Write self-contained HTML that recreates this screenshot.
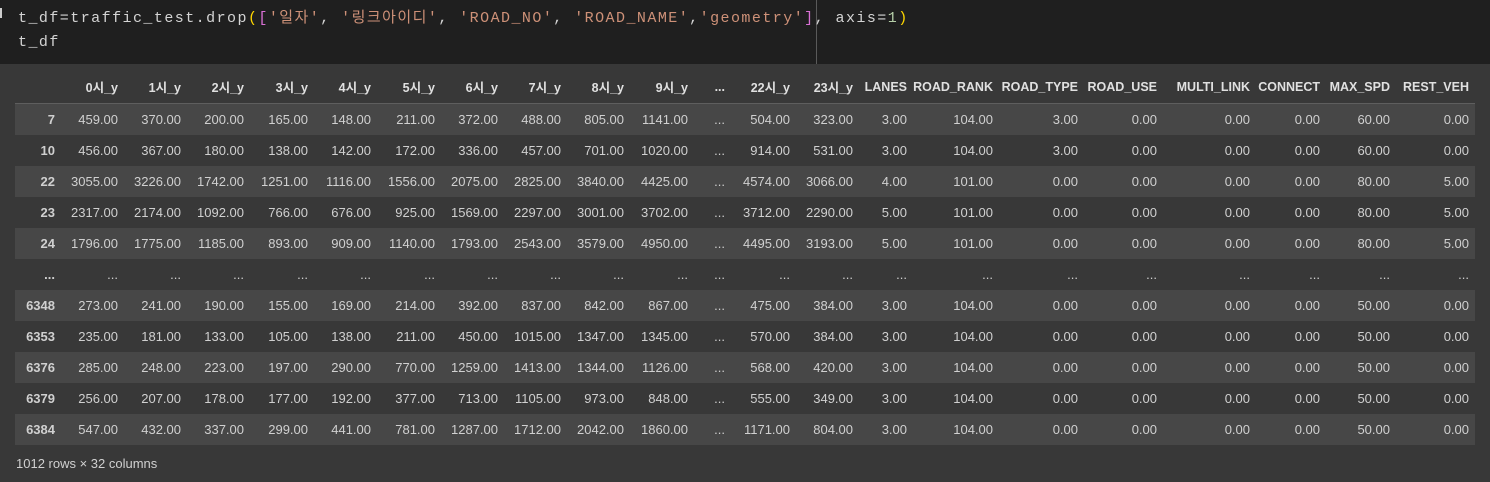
<!DOCTYPE html>
<html><head><meta charset="utf-8"><style>
body{margin:0;width:1490px;height:482px;background:#383838;overflow:hidden;font-family:"Liberation Sans","Noto Sans CJK KR",sans-serif;}
#code{position:absolute;left:0;top:0;width:1490px;height:64px;background:#1f1f1f;}
#code pre{position:absolute;left:18px;top:7px;margin:0;font-family:"Liberation Mono","Noto Sans CJK KR",monospace;font-size:15px;line-height:24px;color:#d4d4d4;letter-spacing:1.45px}
.s{color:#ce9178}.y{color:#ffd700}.p{color:#da70d6}.n{color:#b5cea8}
#ruler{position:absolute;left:816px;top:0;width:1px;height:64px;background:#5a5a5a}
#mark{position:absolute;left:0;top:8px;width:2px;height:10px;background:#ccc}
table{position:absolute;left:15px;top:64px;border-collapse:collapse;table-layout:fixed;font-size:13px;color:#d0d0d0;}
td,th{text-align:right;padding:0;white-space:nowrap;overflow:visible}
thead th{height:39px;font-weight:bold;color:#e0e0e0;font-size:12.5px;padding-top:7px;box-sizing:border-box}
thead tr{border-bottom:1px solid #5e5e5e}
tbody td{height:31px}
tbody th{height:31px}
tbody tr:nth-child(odd){background:#474747}
.last{padding-right:6px}
#foot{position:absolute;left:16px;top:456px;font-size:13px;color:#d0d0d0}
</style></head><body>
<div id="code"><div id="mark"></div><div id="ruler"></div>
<pre>t_df=traffic_test.drop<span class="y">(</span><span class="p">[</span><span class="s">'일자'</span>, <span class="s">'링크아이디'</span>, <span class="s">'ROAD_NO'</span>, <span class="s">'ROAD_NAME'</span>,<span class="s">'geometry'</span><span class="p">]</span>, axis=<span class="n">1</span><span class="y">)</span>
t_df</pre></div>
<table>
<colgroup><col style="width:40px"><col style="width:63px"><col style="width:63px"><col style="width:63px"><col style="width:64px"><col style="width:63px"><col style="width:64px"><col style="width:63px"><col style="width:63px"><col style="width:63px"><col style="width:64px"><col style="width:37px"><col style="width:65px"><col style="width:63px"><col style="width:54px"><col style="width:86px"><col style="width:85px"><col style="width:79px"><col style="width:93px"><col style="width:70px"><col style="width:70px"><col style="width:85px"></colgroup>
<thead><tr><th></th><th>0시_y</th><th>1시_y</th><th>2시_y</th><th>3시_y</th><th>4시_y</th><th>5시_y</th><th>6시_y</th><th>7시_y</th><th>8시_y</th><th>9시_y</th><th>...</th><th>22시_y</th><th>23시_y</th><th>LANES</th><th>ROAD_RANK</th><th>ROAD_TYPE</th><th>ROAD_USE</th><th>MULTI_LINK</th><th>CONNECT</th><th>MAX_SPD</th><th class="last">REST_VEH</th></tr></thead>
<tbody>
<tr><th>7</th><td>459.00</td><td>370.00</td><td>200.00</td><td>165.00</td><td>148.00</td><td>211.00</td><td>372.00</td><td>488.00</td><td>805.00</td><td>1141.00</td><td>...</td><td>504.00</td><td>323.00</td><td>3.00</td><td>104.00</td><td>3.00</td><td>0.00</td><td>0.00</td><td>0.00</td><td>60.00</td><td class="last">0.00</td></tr>
<tr><th>10</th><td>456.00</td><td>367.00</td><td>180.00</td><td>138.00</td><td>142.00</td><td>172.00</td><td>336.00</td><td>457.00</td><td>701.00</td><td>1020.00</td><td>...</td><td>914.00</td><td>531.00</td><td>3.00</td><td>104.00</td><td>3.00</td><td>0.00</td><td>0.00</td><td>0.00</td><td>60.00</td><td class="last">0.00</td></tr>
<tr><th>22</th><td>3055.00</td><td>3226.00</td><td>1742.00</td><td>1251.00</td><td>1116.00</td><td>1556.00</td><td>2075.00</td><td>2825.00</td><td>3840.00</td><td>4425.00</td><td>...</td><td>4574.00</td><td>3066.00</td><td>4.00</td><td>101.00</td><td>0.00</td><td>0.00</td><td>0.00</td><td>0.00</td><td>80.00</td><td class="last">5.00</td></tr>
<tr><th>23</th><td>2317.00</td><td>2174.00</td><td>1092.00</td><td>766.00</td><td>676.00</td><td>925.00</td><td>1569.00</td><td>2297.00</td><td>3001.00</td><td>3702.00</td><td>...</td><td>3712.00</td><td>2290.00</td><td>5.00</td><td>101.00</td><td>0.00</td><td>0.00</td><td>0.00</td><td>0.00</td><td>80.00</td><td class="last">5.00</td></tr>
<tr><th>24</th><td>1796.00</td><td>1775.00</td><td>1185.00</td><td>893.00</td><td>909.00</td><td>1140.00</td><td>1793.00</td><td>2543.00</td><td>3579.00</td><td>4950.00</td><td>...</td><td>4495.00</td><td>3193.00</td><td>5.00</td><td>101.00</td><td>0.00</td><td>0.00</td><td>0.00</td><td>0.00</td><td>80.00</td><td class="last">5.00</td></tr>
<tr><th>...</th><td>...</td><td>...</td><td>...</td><td>...</td><td>...</td><td>...</td><td>...</td><td>...</td><td>...</td><td>...</td><td>...</td><td>...</td><td>...</td><td>...</td><td>...</td><td>...</td><td>...</td><td>...</td><td>...</td><td>...</td><td class="last">...</td></tr>
<tr><th>6348</th><td>273.00</td><td>241.00</td><td>190.00</td><td>155.00</td><td>169.00</td><td>214.00</td><td>392.00</td><td>837.00</td><td>842.00</td><td>867.00</td><td>...</td><td>475.00</td><td>384.00</td><td>3.00</td><td>104.00</td><td>0.00</td><td>0.00</td><td>0.00</td><td>0.00</td><td>50.00</td><td class="last">0.00</td></tr>
<tr><th>6353</th><td>235.00</td><td>181.00</td><td>133.00</td><td>105.00</td><td>138.00</td><td>211.00</td><td>450.00</td><td>1015.00</td><td>1347.00</td><td>1345.00</td><td>...</td><td>570.00</td><td>384.00</td><td>3.00</td><td>104.00</td><td>0.00</td><td>0.00</td><td>0.00</td><td>0.00</td><td>50.00</td><td class="last">0.00</td></tr>
<tr><th>6376</th><td>285.00</td><td>248.00</td><td>223.00</td><td>197.00</td><td>290.00</td><td>770.00</td><td>1259.00</td><td>1413.00</td><td>1344.00</td><td>1126.00</td><td>...</td><td>568.00</td><td>420.00</td><td>3.00</td><td>104.00</td><td>0.00</td><td>0.00</td><td>0.00</td><td>0.00</td><td>50.00</td><td class="last">0.00</td></tr>
<tr><th>6379</th><td>256.00</td><td>207.00</td><td>178.00</td><td>177.00</td><td>192.00</td><td>377.00</td><td>713.00</td><td>1105.00</td><td>973.00</td><td>848.00</td><td>...</td><td>555.00</td><td>349.00</td><td>3.00</td><td>104.00</td><td>0.00</td><td>0.00</td><td>0.00</td><td>0.00</td><td>50.00</td><td class="last">0.00</td></tr>
<tr><th>6384</th><td>547.00</td><td>432.00</td><td>337.00</td><td>299.00</td><td>441.00</td><td>781.00</td><td>1287.00</td><td>1712.00</td><td>2042.00</td><td>1860.00</td><td>...</td><td>1171.00</td><td>804.00</td><td>3.00</td><td>104.00</td><td>0.00</td><td>0.00</td><td>0.00</td><td>0.00</td><td>50.00</td><td class="last">0.00</td></tr>
</tbody></table>
<div id="foot">1012 rows × 32 columns</div>
</body></html>
